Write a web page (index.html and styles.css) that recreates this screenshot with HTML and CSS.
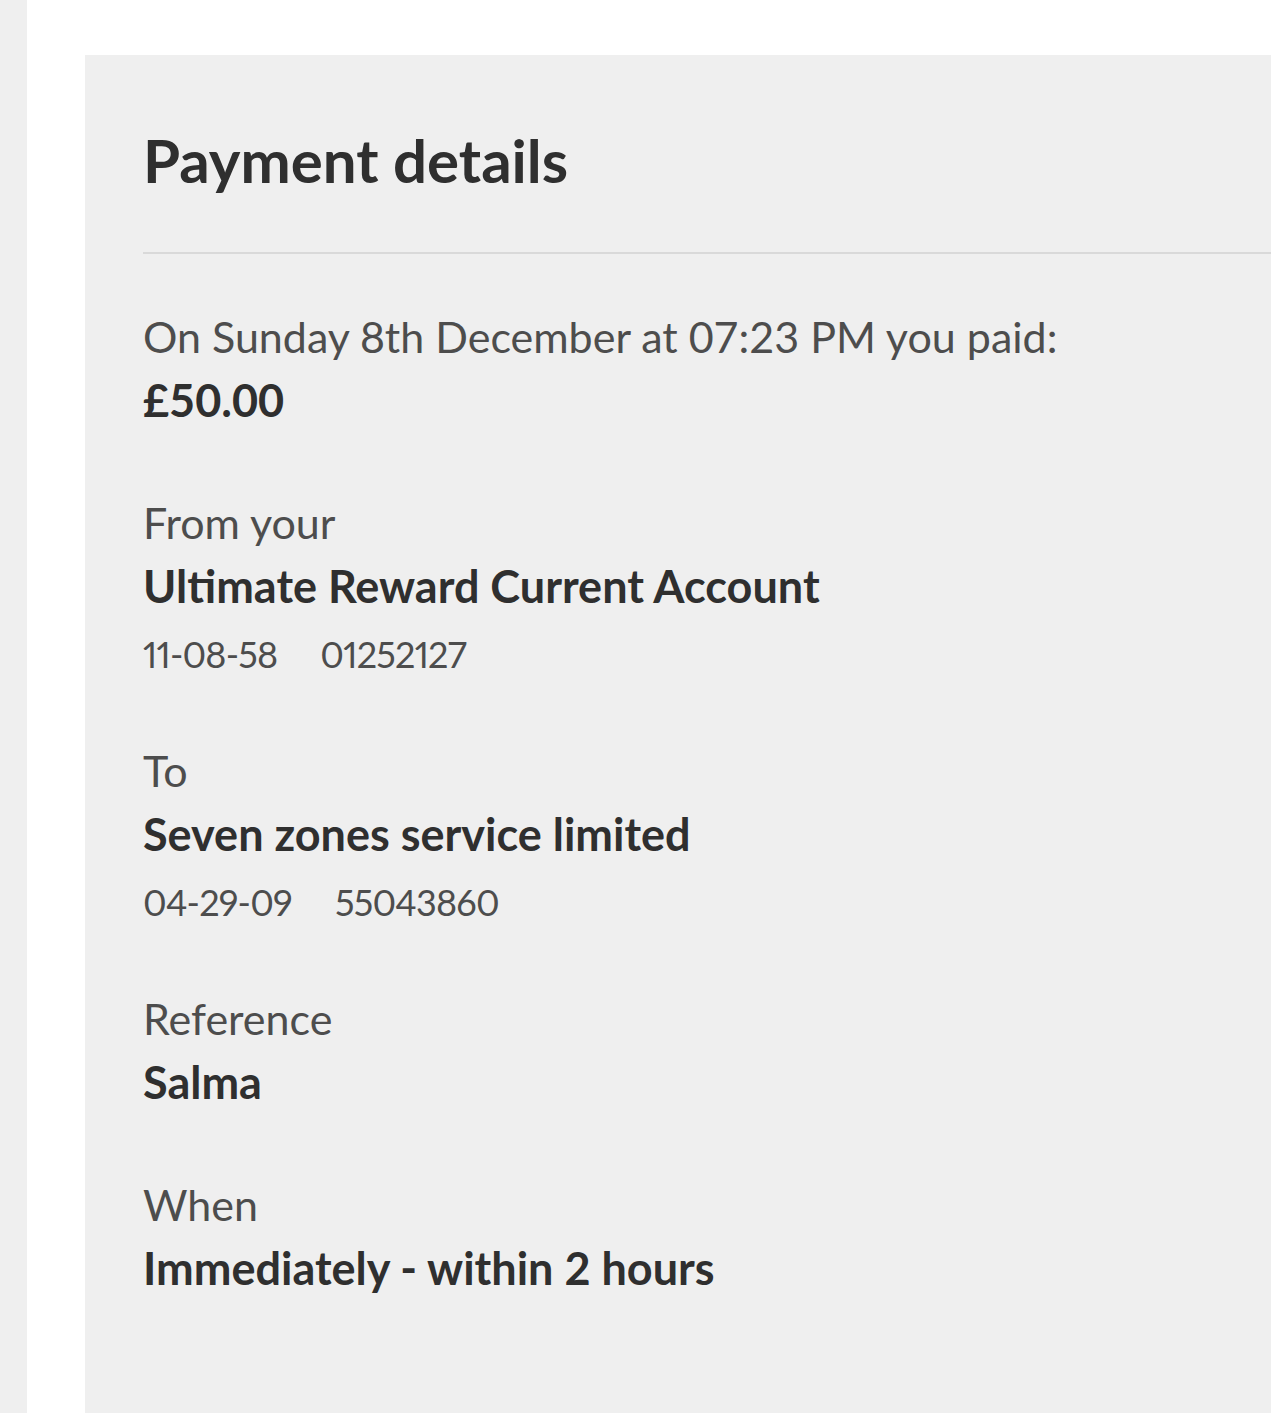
FILE: index.html
```html
<!DOCTYPE html>
<html lang="en">
<head>
<meta charset="utf-8">
<title>Payment details</title>
<link rel="stylesheet" href="styles.css">
</head>
<body>
<div class="page">
  <section class="panel">
    <h1 class="title">Payment details</h1>
    <hr class="divider">
    <div class="group">
      <p class="label">On Sunday 8th December at 07:23 PM you paid:</p>
      <p class="value">£50.00</p>
    </div>
    <div class="group group--account">
      <p class="label">From your</p>
      <p class="value">Ultimate Reward Current Account</p>
      <p class="numbers"><span class="sort">11-08-58</span><span>01252127</span></p>
    </div>
    <div class="group group--account">
      <p class="label">To</p>
      <p class="value">Seven zones service limited</p>
      <p class="numbers"><span class="sort">04-29-09</span><span>55043860</span></p>
    </div>
    <div class="group">
      <p class="label">Reference</p>
      <p class="value">Salma</p>
    </div>
    <div class="group">
      <p class="label">When</p>
      <p class="value">Immediately - within 2 hours</p>
    </div>
  </section>
</div>
</body>
</html>
```
FILE: styles.css
```css
html, body {
  margin: 0;
  padding: 0;
  height: 100%;
}
body {
  background: #efefef;
  font-family: Lato, "Noto Sans", sans-serif;
  color: #333;
  overflow: hidden;
}
.page {
  margin-left: 27px;
  background: #fff;
  height: 100%;
  padding: 55px 0 0 58px;
  box-sizing: border-box;
  display: flex;
  flex-direction: column;
}
.panel {
  flex: 1;
  background: #efefef;
  padding: 69px 0 0 58px;
}
.title {
  margin: 0;
  font-size: 60px;
  line-height: 72px;
  font-weight: 700;
  color: #2f2f2f;
}
.divider {
  border: 0;
  height: 2px;
  background: #d9d9d9;
  margin: 56px 0 51px 0;
}
.group {
  margin-bottom: 60px;
}
.group--account {
  margin-bottom: 55px;
}
.label {
  margin: 0;
  font-size: 43px;
  line-height: 64px;
  color: #4d4d4d;
}
.value {
  margin: 0;
  font-size: 45px;
  line-height: 62px;
  font-weight: 700;
  color: #2f2f2f;
}
.numbers {
  margin: 7px 0 0 0;
  font-size: 36px;
  line-height: 60px;
  letter-spacing: -0.8px;
  font-variant-numeric: proportional-nums;
  color: #4d4d4d;
}
.sort {
  margin-right: 43px;
}
```
